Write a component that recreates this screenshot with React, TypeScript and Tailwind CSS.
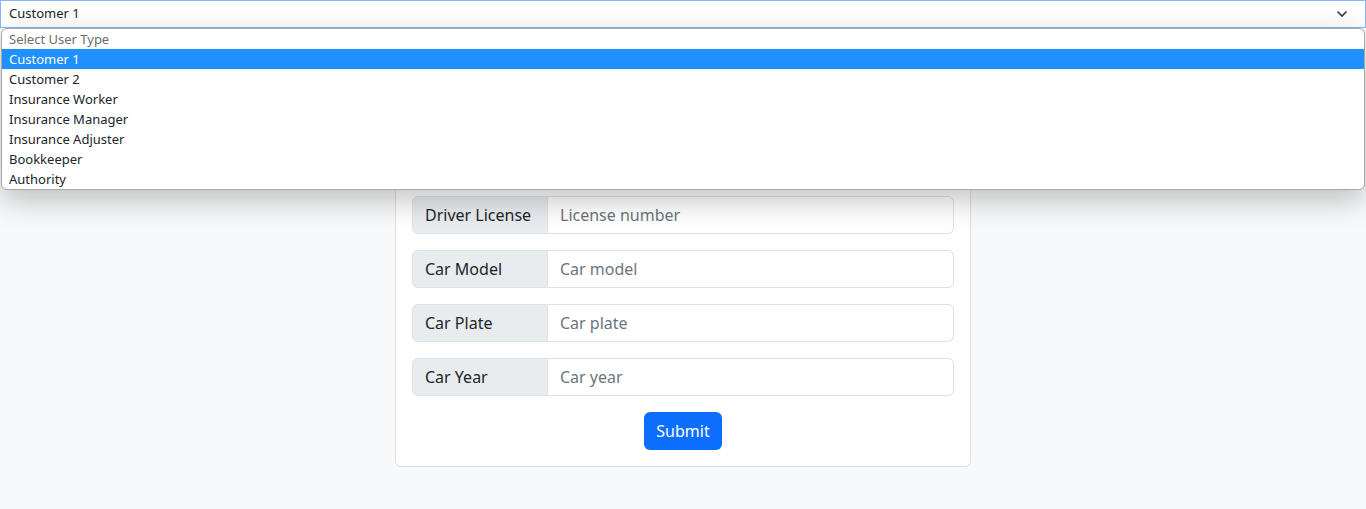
import React from "react";

const userTypes = [
  "Customer 1",
  "Customer 2",
  "Insurance Worker",
  "Insurance Manager",
  "Insurance Adjuster",
  "Bookkeeper",
  "Authority",
];

const fields = [
  { label: "Name", placeholder: "Full name" },
  { label: "Address", placeholder: "Address" },
  { label: "Driver License", placeholder: "License number" },
  { label: "Car Model", placeholder: "Car model" },
  { label: "Car Plate", placeholder: "Car plate" },
  { label: "Car Year", placeholder: "Car year" },
];

const UserTypeSelect: React.FC = () => {
  return (
    <div className="relative z-10">
      <div className="flex items-center justify-between h-[28px] px-2 bg-white border border-[#86b7fe] text-[13px] text-[#212529]">
        <span>Customer 1</span>
        <svg width="12" height="8" viewBox="0 0 12 8" className="mr-[9px]">
          <path d="M1.5 1.5 L6 6 L10.5 1.5" fill="none" stroke="#343a40" strokeWidth="1.6" />
        </svg>
      </div>
      <ul className="absolute left-px right-px top-[28px] bg-white border border-[#a8a8a8] rounded-[6px] overflow-hidden shadow-[0_10px_30px_rgba(0,0,0,0.24)] text-[13px] leading-[20px]">
        <li className="px-[7px] text-[#6d6d6d]">Select User Type</li>
        {userTypes.map((t, i) => (
          <li
            key={t}
            className={
              i === 0 ? "px-[7px] bg-[#1e90ff] text-white" : "px-[7px] text-[#212529]"
            }
          >
            {t}
          </li>
        ))}
      </ul>
    </div>
  );
};

export default function App() {
  return (
    <div className="min-h-[509px] bg-[#f8f9fa] font-['Noto_Sans',sans-serif]">
      <UserTypeSelect />
      <div className="pt-[43px]">
        <div className="w-[576px] mx-auto bg-white border border-[#dfdfdf] rounded-[6px] p-4">
          {fields.map((f) => (
            <div key={f.label} className="flex h-[38px] mb-4 text-[16px]">
              <span className="w-[136px] shrink-0 flex items-center px-3 bg-[#e9ecef] border border-[#dee2e6] rounded-l-[6px] text-[#212529]">
                {f.label}
              </span>
              <input
                className="flex-1 min-w-0 px-3 border border-l-0 border-[#dee2e6] rounded-r-[6px] text-[#212529] placeholder:text-[#6c757d] outline-none"
                placeholder={f.placeholder}
              />
            </div>
          ))}
          <div className="flex justify-center">
            <button className="h-[38px] px-3 bg-[#0d6efd] text-white rounded-[6px] text-[16px]">
              Submit
            </button>
          </div>
        </div>
      </div>
    </div>
  );
}
